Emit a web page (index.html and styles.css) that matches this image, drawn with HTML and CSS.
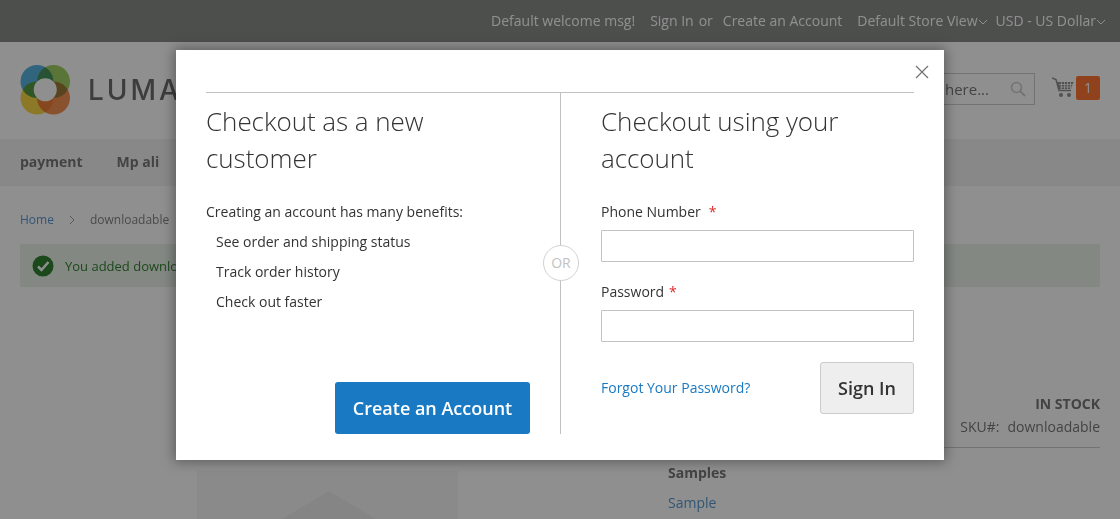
FILE: index.html
```html
<!DOCTYPE html>
<html lang="en">
<head>
<meta charset="utf-8">
<title>Checkout</title>
<link rel="stylesheet" href="styles.css">
</head>
<body>
<div class="page">
  <div class="panel">
    <span>Default welcome msg!</span>
    <span class="links"><span>Sign In</span><span>or</span><span>Create an Account</span></span>
    <span class="switches">
      <span class="switch">Default Store View<svg class="chev" width="10" height="6" viewBox="0 0 10 6"><path d="M1 1l4 4 4-4" fill="none" stroke="currentColor" stroke-width="1"/></svg></span>
      <span class="switch">USD - US Dollar<svg class="chev" width="10" height="6" viewBox="0 0 10 6"><path d="M1 1l4 4 4-4" fill="none" stroke="currentColor" stroke-width="1"/></svg></span>
    </span>
  </div>
  <header class="header">
    <div class="logo">
      <svg class="logo-mark" width="50" height="50" viewBox="0 0 50 50">
        <g class="petals">
          <circle cx="17" cy="16.500" r="16.500" fill="#2f9fd8"/>
          <circle cx="33.500" cy="16.500" r="16.500" fill="#8cc63f"/>
          <circle cx="17" cy="33" r="16.500" fill="#f5cf1a"/>
          <circle cx="33.500" cy="33" r="16.500" fill="#f4762a"/>
        </g>
        <circle cx="25.250" cy="24.750" r="11.500" fill="#fff"/>
      </svg>
      <span class="logo-text">LUMA</span>
    </div>
    <div class="tools">
      <div class="search"><span>Search entire store here...</span>
        <svg width="16" height="16" viewBox="0 0 16 16"><circle cx="6.500" cy="6.500" r="5" fill="none" stroke="#c2c2c2" stroke-width="1.600"/><path d="M10 10l5 5" stroke="#c2c2c2" stroke-width="1.800"/></svg>
      </div>
      <svg class="cart" width="22" height="21" viewBox="0 0 22 21"><path d="M0 1l4 1.500 3 11h12" fill="none" stroke="#757575" stroke-width="1.500"/><path d="M5 5h16.500l-2.500 7H7z" fill="#757575"/><path d="M7 7.500h14M8 10h12M9.500 5v7M12.500 5v7M15.500 5v7M18.500 5v7" stroke="#fff" stroke-width=".8"/><circle cx="9" cy="18" r="2" fill="#757575"/><circle cx="17" cy="18" r="2" fill="#757575"/></svg>
      <span class="badge">1</span>
    </div>
  </header>
  <nav class="nav"><span>payment</span><span>Mp ali</span></nav>
  <div class="crumbs"><span class="crumb-link">Home</span>
    <svg width="6" height="10" viewBox="0 0 6 10"><path d="M1 1l4 4-4 4" fill="none" stroke="#8a8a8a" stroke-width="1"/></svg>
    <span>downloadable</span></div>
  <div class="message">
    <svg width="22" height="22" viewBox="0 0 22 22"><circle cx="11" cy="11" r="10.500" fill="#006400"/><path d="M6 11.500l3.500 3.500 7-8" fill="none" stroke="#fff" stroke-width="2.500"/></svg>
    <span class="message-text">You added downloadable</span>
  </div>
  <main class="product">
    <div class="media"><svg class="placeholder" width="261" height="60" viewBox="0 0 261 60"><path d="M65 60L132 20l67 40z" fill="#e8e8e8"/></svg></div>
    <div class="info">
      <div class="stock">
        <strong>IN STOCK</strong>
        <span class="sku"><span>SKU#:</span><span>downloadable</span></span>
      </div>
      <div class="samples">
        <strong>Samples</strong>
        <span class="sample-link">Sample</span>
      </div>
    </div>
  </main>
</div>
<div class="overlay"></div>
<div class="modal-wrap">
  <section class="modal">
    <button class="close" type="button" aria-label="Close"><svg width="14" height="14" viewBox="0 0 14 14"><path d="M1 1l12 12M13 1L1 13" stroke="#757575" stroke-width="1.300" fill="none"/></svg></button>
    <div class="columns">
      <div class="col-new">
        <h2>Checkout as a new customer</h2>
        <p class="lead">Creating an account has many benefits:</p>
        <ul class="benefits">
          <li>See order and shipping status</li>
          <li>Track order history</li>
          <li>Check out faster</li>
        </ul>
        <button class="btn-primary" type="button">Create an Account</button>
        <span class="or">OR</span>
      </div>
      <div class="col-login">
        <h2>Checkout using your account</h2>
        <form class="form">
          <label class="field"><span class="label">Phone Number<em class="req phone-req">*</em></span><input type="text"></label>
          <label class="field"><span class="label">Password<em class="req">*</em></span><input type="password"></label>
          <div class="actions"><span class="forgot">Forgot Your Password?</span><button class="btn-secondary" type="button">Sign In</button></div>
        </form>
      </div>
    </div>
  </section>
</div>
</body>
</html>
```
FILE: styles.css
```css
* { box-sizing: border-box; }
html, body { margin: 0; height: 519px; overflow: hidden; }
body { font: 14px/20px "Open Sans", sans-serif; color: #333; background: #fff; }
.page { height: 519px; overflow: hidden; }

.panel { height: 42px; background: #6e716e; color: #fff; display: flex; justify-content: flex-end; align-items: center; gap: 15px; padding-right: 14px; padding-bottom: 1px; }
.links { display: flex; gap: 5px; }
.links span:last-child { margin-left: 5px; }
.switches { display: flex; gap: 8px; }
.switch { display: inline-flex; align-items: center; }
.chev { margin-top: 3px; }

.header { height: 97px; display: flex; justify-content: space-between; padding: 0 20px; }
.logo { display: flex; align-items: center; gap: 18px; margin-top: 3px; height: 90px; }
.logo-mark { flex: none; }
.petals { isolation: isolate; }
.petals circle { mix-blend-mode: multiply; }
.logo-text { font-family: "Inter", sans-serif; font-size: 28px; letter-spacing: 3px; color: #4a4a4a; font-weight: 500; }
.tools { display: flex; align-items: flex-start; padding-top: 31px; }
.search { width: 250px; height: 32px; border: 1px solid #c2c2c2; display: flex; justify-content: flex-end; align-items: center; gap: 21px; padding-right: 8px; color: #575757; font-size: 15px; }
.cart { margin: 4px 2px 0 17px; }
.badge { width: 24px; height: 24px; margin-top: 3px; border-radius: 2px; background: #ff5501; color: #fff; font-size: 14px; line-height: 24px; text-align: center; }

.nav { height: 47px; background: #f0f0f0; display: flex; align-items: center; gap: 34px; padding: 0 20px 1px; font-weight: 700; color: #575757; }

.crumbs { height: 58px; display: flex; align-items: center; gap: 15px; padding: 9px 20px 0; font-size: 12px; color: #666; }
.crumb-link { color: #2f7fc8; }

.message { height: 43px; margin: 0 20px; background: #e5efe5; display: flex; align-items: center; gap: 11px; padding: 0 12px; color: #006400; font-size: 13px; }
.message-text { white-space: nowrap; }

.product { display: flex; padding: 0 20px; }
.media { width: 648px; padding: 184px 0 0 177px; flex: none; }
.placeholder { display: block; background: #f4f4f4; }
.info { flex: 1; padding-top: 107px; }
.stock { display: flex; flex-direction: column; align-items: flex-end; border-bottom: 1px solid #c1c1c1; padding-bottom: 10px; gap: 3px; color: #575757; }
.sku { display: flex; gap: 8px; }
.samples { display: flex; flex-direction: column; gap: 10px; padding-top: 15px; color: #575757; }
.sample-link { color: #2f7fc8; }

.overlay { position: fixed; top: 0; left: 0; width: 1120px; height: 519px; background: rgba(51, 51, 51, .55); }
.modal-wrap { position: fixed; top: 0; left: 0; width: 1120px; height: 519px; display: flex; justify-content: center; align-items: flex-start; }
.modal { position: relative; width: 768px; height: 410px; margin-top: 50px; background: #fff; padding: 42px 30px 0; box-shadow: 0 0 12px 2px rgba(0, 0, 0, .35); }
.close { position: absolute; top: 15px; right: 15px; width: 14px; height: 14px; padding: 0; border: 0; background: none; display: block; }
.close svg { display: block; }

.columns { display: flex; height: 342px; border-top: 1px solid #c1c1c1; }
.col-new { position: relative; width: 355px; border-right: 1px solid #c1c1c1; padding-right: 30px; display: flex; flex-direction: column; }
.col-login { flex: 1; padding-left: 40px; }
h2 { margin: 10px 0 0; font-size: 26px; line-height: 37px; font-weight: 300; color: #333; height: 74px; letter-spacing: -.05px; }
.lead { margin: 25px 0 0; line-height: 20px; }
.benefits { list-style: none; margin: 0; padding: 0 0 0 10px; }
.benefits li { margin-top: 10px; line-height: 20px; }
.btn-primary { align-self: flex-end; margin-top: auto; width: 195px; height: 52px; border: 0; border-radius: 3px; background: #1979c3; color: #fff; font: 600 18px "Open Sans", sans-serif; padding: 0; }
.or { position: absolute; top: 152px; right: -19px; width: 36px; height: 36px; border-radius: 50%; border: 1px solid #d1d1d1; background: #fff; color: #c2c2c2; text-align: center; line-height: 33px; font-size: 14px; }

.form { display: block; margin-top: 25px; }
.field { display: block; margin-bottom: 20px; height: 60px; }
.label { display: block; height: 28px; line-height: 20px; color: #333; }
.req { font-style: normal; color: #e02b27; margin-left: 5px; }
.phone-req { margin-left: 8px; }
input { display: block; width: 100%; height: 32px; border: 1px solid #c2c2c2; background: #fff; border-radius: 1px; padding: 0 9px; font: inherit; }
.actions { display: flex; justify-content: space-between; align-items: center; height: 52px; }
.forgot { color: #1979c3; }
.btn-secondary { width: 94px; height: 52px; padding: 0; background: #eee; border: 1px solid #ccc; border-radius: 3px; color: #333; font: 600 18px "Open Sans", sans-serif; }
```
